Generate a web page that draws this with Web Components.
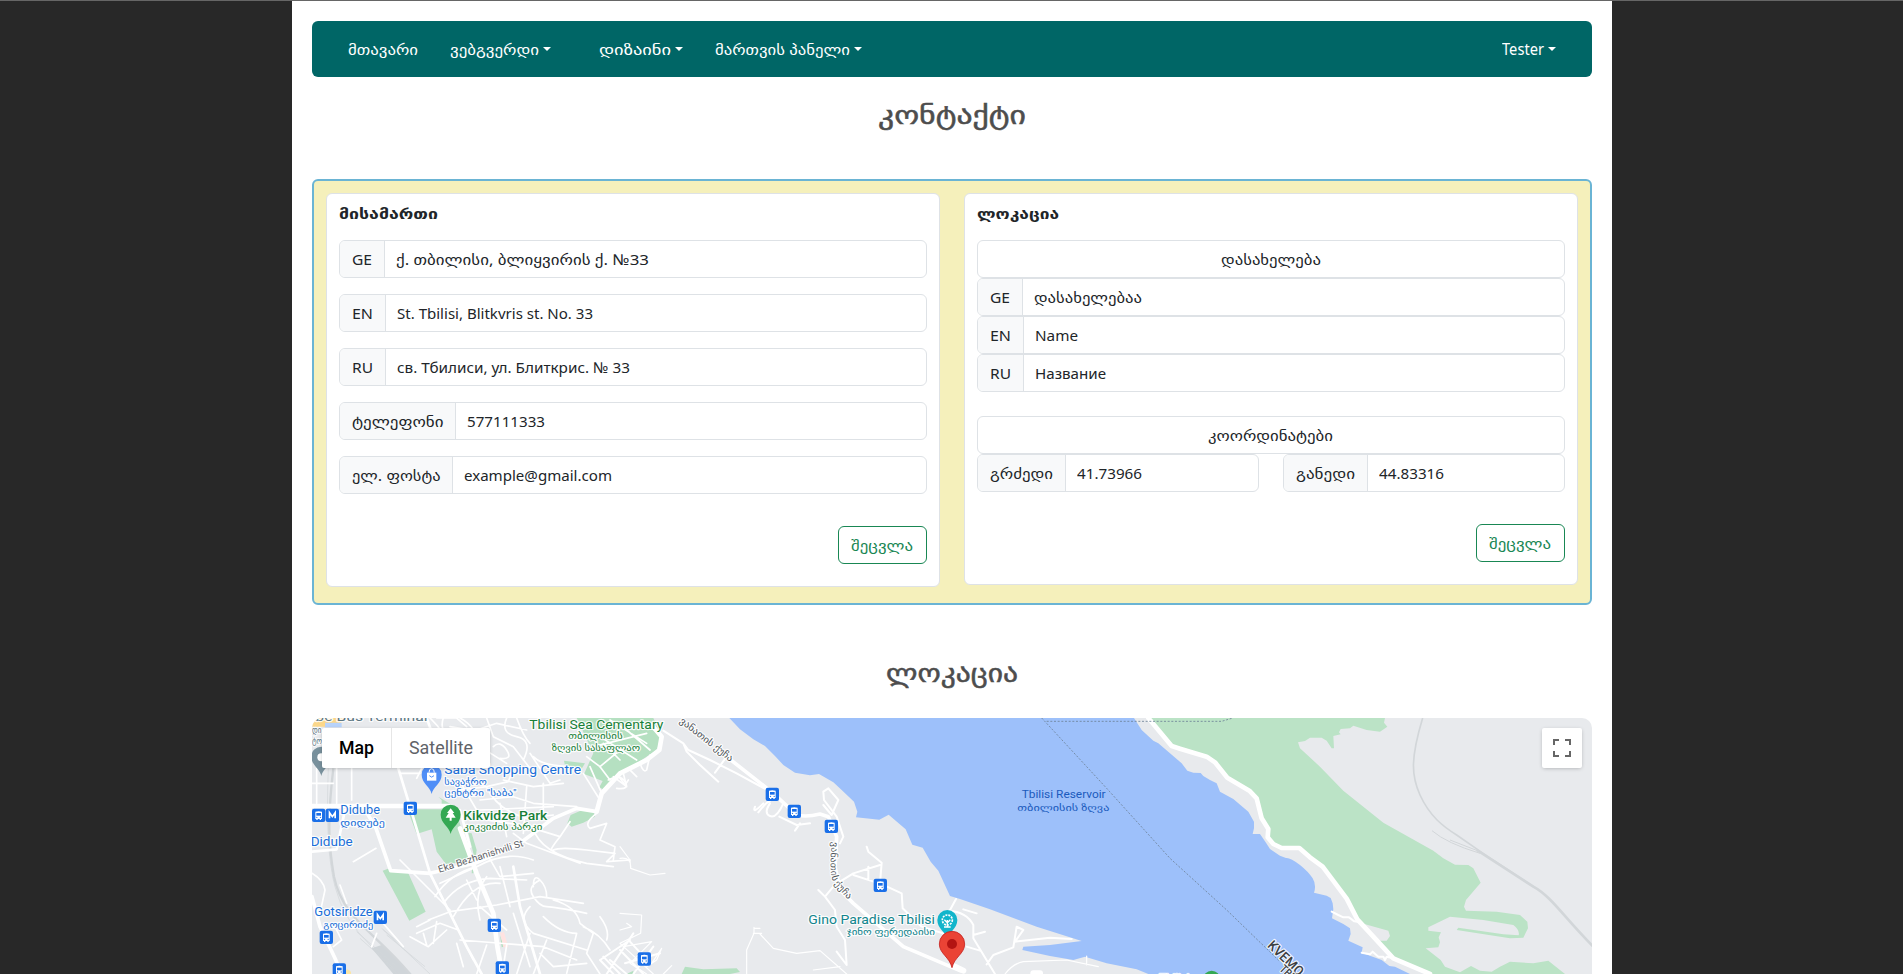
<!DOCTYPE html>
<html lang="ka">
<head>
<meta charset="utf-8">
<title>კონტაქტი</title>
<style>
html,body{margin:0;height:100%;overflow:hidden}
body{background:#282828;font-family:"Noto Sans","DejaVu Sans",sans-serif;font-size:16px;line-height:24px;color:#212529}
</style>
</head>
<body>
<contact-page></contact-page>
<script>
const define=(name,html,extra)=>customElements.define(name,class extends HTMLElement{
  connectedCallback(){
    if(this.shadowRoot)return;
    const root=this.attachShadow({mode:'open'});
    root.innerHTML=typeof html==='function'?html(this):html;
    if(extra)extra(this,root);
  }
});

/* Text squeezed or stretched to a given advance width */
define('fit-text',`<style>
:host{display:inline-block;white-space:nowrap;flex:none}
span{display:inline-block;transform-origin:0 50%;white-space:nowrap}
</style><span><slot></slot></span>`,(el,root)=>{
  const w=parseFloat(el.getAttribute('w')),s=root.querySelector('span');
  const n=s.getBoundingClientRect().width;
  el.style.width=w+'px';
  if(n)s.style.transform=`scaleX(${w/n})`;
});

define('nav-item',`<style>
:host{display:flex;align-items:center;color:#fff}
i{display:none;border:4.5px solid transparent;border-top-color:#fff;border-bottom:0;margin:0 0 1px 4px;width:0;height:0}
:host([menu]) i{display:block}
</style><slot></slot><i></i>`);

define('nav-bar',`<style>
:host{display:flex;align-items:center;gap:32px;height:56px;padding:0 36px;background:#006666;border-radius:6px;box-sizing:border-box;font-size:15px}
.wide{margin-right:16px}
.user{margin-left:auto;font-size:15.5px}
</style>
<nav-item><fit-text w="70">მთავარი</fit-text></nav-item>
<nav-item menu class="wide"><fit-text w="89">ვებგვერდი</fit-text></nav-item>
<nav-item menu><fit-text w="72">დიზაინი</fit-text></nav-item>
<nav-item menu><fit-text w="135">მართვის პანელი</fit-text></nav-item>
<nav-item menu class="user"><fit-text w="42">Tester</fit-text></nav-item>`);

define('page-heading',`<style>
:host{display:flex;justify-content:center;color:#4d4d4d;font-size:25px;line-height:36px;-webkit-text-stroke:.5px #4d4d4d}
</style><slot></slot>`);

define('info-card',`<style>
:host{display:flex;flex-direction:column;background:#fff;border:1px solid #dee2e6;border-radius:6px;padding:7px 12px 22px;box-sizing:border-box}
header{font-weight:700;font-size:15px;height:39px;line-height:24px}
</style><header><slot name="title"></slot></header><slot></slot>`);

define('field-row',`<style>
:host{display:flex;height:38px;border:1px solid #dee2e6;border-radius:6px;box-sizing:border-box;overflow:hidden;font-size:15px;line-height:36px;background:#fff}
.label{background:#f8f9fa;border-right:1px solid #dee2e6;padding:0 12px;display:flex}
.value{padding:0 11px;display:flex;flex:1}
</style><div class="label"><slot name="label"></slot></div><div class="value"><slot></slot></div>`);

define('field-caption',`<style>
:host{display:flex;justify-content:center;height:38px;border:1px solid #dee2e6;border-radius:6px;box-sizing:border-box;font-size:15px;line-height:36px}
</style><slot></slot>`);

define('edit-button',`<style>
:host{display:flex;align-self:flex-end;height:38px;width:89px;justify-content:center;border:1px solid #198754;border-radius:6px;box-sizing:border-box;color:#198754;font-size:15px;line-height:36px}
</style><fit-text w="62">შეცვლა</fit-text>`);

const bus=(x,y)=>`<g transform="translate(${x-20} ${y-20})"><rect width="40" height="40" rx="6" fill="#1a6fe8"/><path d="M10 9q10-3 20 0v22h-3v3h-4v-3h-6v3h-4v-3h-3z" fill="#fff"/><path d="M13 13h14v8H13z" fill="#1a6fe8"/><circle cx="14.5" cy="26" r="2" fill="#1a6fe8"/><circle cx="25.500" cy="26" r="2" fill="#1a6fe8"/></g>`;
const metro=(x,y)=>`<g transform="translate(${x-20} ${y-20})"><rect width="40" height="40" rx="6" fill="#1a6fe8"/><path d="M11.500 29V12l8.500 12 8.500-12v17" fill="none" stroke="#fff" stroke-width="5"/></g>`;
const t=(x,y,x2,size,fill,txt,more='')=>`<text x="${x}" y="${y}" textLength="${x2-x}" lengthAdjust="spacingAndGlyphs" font-size="${size}" fill="${fill}" ${more}>${txt}</text>`;
const pin=(x,y,c)=>`<path d="M${x} ${y+58}c-4-22-30-32-30-58a30 30 0 0 1 60 0c0 26-26 36-30 58z" fill="${c}"/>`;
const G='#188038',B='#1a6fd8',T='#12858d';

define('map-view',`<style>
:host{display:block;height:256px;border-radius:10px 10px 0 0;overflow:hidden;display:grid;position:relative;background:#e8eaed}
svg{display:block;width:1280px;height:256px;font-family:Roboto,"DejaVu Sans",sans-serif}
.halo text{paint-order:stroke;stroke:#fff;stroke-width:7px;stroke-linejoin:round;stroke-opacity:.85}
.nohalo text{stroke:none}
.w{fill:none;stroke:#fff;stroke-linecap:round;stroke-linejoin:round}
.r{fill:none;stroke:#d2d6d9}
.types{position:absolute;left:10px;top:10px;height:40px;display:flex;background:#fff;border-radius:2px;box-shadow:0 1px 4px -1px rgba(0,0,0,.3);font:18px/40px Roboto,sans-serif;color:#5f6368}
.types div{padding:0 17px;}
.types div:first-child{color:#000;font-weight:500;border-right:1px solid #e6e6e6}
.full{position:absolute;right:10px;top:10px;width:40px;height:40px;background:#fff;border-radius:2px;box-shadow:0 1px 4px -1px rgba(0,0,0,.3)}
.full svg{width:40px;height:40px}
</style>
<svg viewBox="312 718 1280 256">
<g transform="translate(620 700) scale(.333333)">
<path fill="#9dc0fa" d="M328 54L360 88 400 118 435 138 465 168 490 195 525 218 570 226 597 222 640 247 665 270 702 305 712 335 708 352 778 359 806 344 857 388 877 434 908 443 932 485 955 512 990 588 1020 597 1110 628 1250 680 1385 723 1290 735 1210 740 1207 750 1290 768 1360 780 1395 770 1460 790 1550 808 1585 822H2370L2325 800 2308 798 2285 780 2225 758 2228 742 2185 722 2192 702 2190 685 2170 672 2136 655 2140 628 2138 610 2132 594 2120 587 2082 578Q2090 555 2078 535 2065 515 2040 495 2010 472 1998 474L1980 467 1950 447 1938 428 1920 402 1898 402 1902 385 1902 365 1885 335 1840 297 1800 275 1790 250 1770 240 1750 228 1742 219 1720 218 1702 212 1685 190 1650 160 1615 130 1600 122 1565 90 1542 54z"/>
<path fill="#bbe3c6" d="M1590 54L1660 135 1760 165 1820 230 1890 270 1915 310 1935 365 1945 390 1945 415 1980 440 2040 440 2110 500 2180 600 2225 670 2305 692 2310 708 2300 722 2275 722 2325 775 2430 822H2835L2785 782 2740 790 2670 785 2640 800 2615 815 2580 812 2553 798 2520 817 2475 800 2462 780 2417 745 2455 742 2460 727 2456 712 2463 697 2425 692 2425 682 2490 650 2590 660 2680 675Q2700 690 2696 706L2650 703 2515 683 2510 690 2670 715 2710 713 2724 685 2722 665 2700 645 2630 635 2538 632 2532 620 2538 600 2582 548 2560 505 2545 495 2505 494 2470 475 2440 452 2290 368 2170 272 2100 200 2040 145 2034 127 2055 123 2070 113 2105 113 2120 122 2135 145 2142 145 2140 108 2162 103 2157 97 2162 87 2190 85 2200 77 2240 90 2280 95 2302 80 2292 68 2295 54z"/>
<path fill="#b5e0c1" d="M185 822L195 800 250 808 350 805 360 816 330 822z"/>
<g class="w">
<path stroke-width="14" d="M1585 54L1655 138 1680 146 1760 170 1785 187 1822 233 1888 272 1910 295 1925 355 1945 387 1943 412 1960 432 1985 444H2038L2070 472 2108 500 2180 596 2212 658 2260 710 2320 775 2430 822"/>
<path stroke-width="6" d="M2135 635L2155 645 2170 652 2187 652 2203 664 2212 665M2225 758L2250 763 2258 755 2275 770 2290 770 2295 780 2300 770 2320 775"/>
<path stroke-width="11" d="M320 170L460 280 530 345Q560 352 600 342L625 350 650 410 645 500 660 570 700 610 850 740 1020 812"/>
<path stroke-width="6" d="M130 92L190 130 205 150 270 180 350 220 438 268M190 130L200 155 240 195 295 245M320 170L285 218M430 310Q395 345 405 320M415 337Q440 305 450 303M450 310Q430 340 450 348T490 310M478 350L530 375 570 370M525 392L540 370M610 315L635 345 655 300 625 265 610 275 612 300 650 350 670 410 660 430M740 440L745 455 785 488 780 550 845 580 848 625 905 680 985 705M660 545L700 520 780 495M745 500L745 540M700 525L770 548M640 560L615 590 595 570M615 590L645 630 650 680 675 720 680 795 650 755M1008 597L990 630M985 632Q1040 635 1060 675V715L1125 822M1030 628L1070 640M1060 705L1095 695M1040 740L1080 752M1100 793L1120 765 1180 742 1190 680 1210 690 1185 725 1290 713 1355 717"/>
<path stroke-width="3.500" d="M1155 822Q1180 790 1210 785L1340 780 1435 800M1400 768V795M0 440L30 480 32 505 90 525 135 520M0 475Q35 470 32 505M0 640L65 645 62 700 0 730 100 822M0 690 35 680 20 670M10 740L95 725 30 790 80 822M95 790L125 745 110 780 80 800M400 700H425M402 682V700M402 685H420M402 700L380 750 380 822M420 702L460 745 530 760 600 752 680 822M580 810L660 800M155 797L130 822"/>
<path stroke-width="18" d="M1005 800L1030 812M1240 820H1260"/>
</g>
<g fill="none" stroke="#6d8297" stroke-width="2.500" stroke-dasharray="6 5"><path d="M1265 54L1280 70 1460 265 1650 475 1820 630 1980 785M1280 64H1805L1835 55"/></g>
<g class="r"><path stroke-width="5" d="M2408 54C2370 180 2375 230 2400 285 2430 350 2470 380 2510 405L2585 457 2740 560"/><path stroke-width="8" d="M2570 450L2740 560C2795 590 2830 650 2920 740"/><path stroke-width="3" d="M2436 392Q2480 430 2580 460M2490 420L2585 457"/></g>
</g>

<g transform="translate(300 700) scale(.333333)">
<g fill="#b5e0c1"><path d="M830 54H1060L1085 110 1070 150 1010 190 945 240 912 270 898 262 908 243 852 222 880 160zM792 182L855 190 845 206 795 197zM322 328H425V300L415 290 445 308 465 320 500 440 505 480 440 495 410 455 395 388 350 402zM248 512L268 505 325 520 377 635 328 662zM802 370L812 345 840 333H880L885 350 850 368 815 380zM505 398L515 400 530 450 520 520 515 520 520 460zM600 705L612 740 605 742zM980 822L1000 812V822z"/></g>
<path fill="#ffe3e1" d="M600 698L612 696 625 742 610 742z"/>
<path fill="#fbd78a" d="M36 54H138L110 80H36z"/><path fill="#b8d3fb" d="M75 68H125V82H75z"/>
<path fill="#d0d5d9" d="M215 745L245 735 335 822H280z"/>
<g class="r"><path stroke-width="7" d="M100 205C80 370 88 450 102 530 130 660 220 690 330 822"/><path stroke-width="2" d="M85 205Q75 450 105 560 130 660 215 740L290 822M170 695L290 800M180 715L300 822M250 690L390 822M260 705L375 800M245 685L310 740"/></g>
<g class="w">
<path stroke-width="14" d="M36 318H450M480 385L530 520 580 640 592 740 607 822M890 335L905 280 960 220 1040 180 1078 150 1085 110 1055 75"/>
<path stroke-width="11" d="M190 320L228 385 272 512 390 520M390 520L530 488 660 430 760 355 830 325 890 335M36 590L60 680 105 775 125 822"/>
<path stroke-width="8" d="M295 205L330 320 360 420 390 520 445 630 500 740 545 822M36 455L110 448 135 330M380 54L400 110 560 205M640 500L660 620 720 822M480 330L510 440"/>
<path stroke-width="5" d="M36 250H100M155 205V300M50 205V310M110 90V310M160 485L228 445M225 385L190 320M230 700L215 740M245 665L310 740M300 220H360M350 235 365 205M390 54Q440 100 450 160T480 210M430 54Q410 110 500 130L560 190M480 54Q530 80 540 140L620 190M560 54L580 110 640 140 690 205M620 54Q600 100 650 110T670 180M650 54Q670 110 690 130M500 100 590 70 680 90M450 80 540 95M580 140Q600 120 620 150T600 175M410 54H470L500 80M700 170Q720 190 760 195L840 205M690 160L750 250 780 240M640 205L625 245 560 260 480 270M560 260Q590 330 680 355L760 345M480 245 530 330 560 360M610 240L700 260 790 250M540 300L640 290 700 310 830 320M600 310L620 410M680 260L670 400M730 250V340M540 330L760 320M560 360L700 380M640 400 680 430M850 220 900 300M870 200 905 280M860 170 900 200 930 240M880 140 1040 100M900 110 1010 180M940 230 980 260 970 220M890 340Q850 370 870 385L920 370 900 420 945 440 940 480M810 365 780 410 700 385M780 410Q740 460 760 450T860 450L945 460 920 485 990 480M680 430L840 490M700 480Q620 450 530 500L420 550M700 385Q720 460 860 490L940 500"/>
<path stroke-width="5" d="M300 480 450 630M385 660L450 635 590 615 720 590 850 610M405 590Q450 520 530 500M430 610Q480 540 570 535L680 540M460 650Q520 540 600 550M500 540 530 600M540 620 620 690M560 530Q520 580 540 660M600 500 630 620M560 460 600 530 700 520M720 540Q680 560 700 590T740 620 860 640M700 560Q700 520 720 540T740 590M690 620Q650 660 700 700L860 750M480 720 730 740 830 780M560 735 530 822M620 735 610 800M640 640 690 800M690 700 650 822M740 720 700 822M760 600Q830 620 840 670L880 700 860 760 900 822M850 680Q900 700 930 750M720 760 760 800 860 790M730 650Q780 700 830 700L800 820M900 650Q930 690 920 720M350 700 420 670 475 690M330 710 385 740 440 690M370 700 380 735M410 665 400 730M450 640 520 780M470 730 490 800M350 680 390 660M120 555 140 610M36 520Q70 540 75 570L60 640M100 670 125 720 100 740"/>
<path stroke-width="6" d="M940 822L900 780 990 720M1000 700Q960 760 920 822M930 780 980 822M960 750 1030 822M990 725 1050 790M1000 822 1060 740M975 790 1080 760M910 770 960 822"/>
<path stroke-width="5" d="M925 240Q960 220 975 245T950 265M1020 190Q1030 220 1040 210L1050 165M1010 230 985 205M960 235 975 255 985 240M910 130 960 180M980 90 1050 150M930 60 1040 130M960 150 900 200"/>
</g>
<path fill="#fbe5a5" d="M140 808Q155 812 153 822H135z"/>
<g class="halo">
${t(20,62,383,37,'#5c7682','ubube Bus Terminal'.slice(2))}
${t(36,98,64,28,'#5c7682','დი')}${t(36,132,66,28,'#5c7682','ტო')}
${t(688,87,1090,37,G,'Tbilisi Sea Cementary')}
${t(805,117,968,27,G,'თბილისის')}
${t(755,152,1020,27,G,'ზღვის სასაფლაო')}
${t(433,221,843,37,B,'Saba Shopping Centre')}
${t(433,255,560,27,B,'სავაჭრო')}
${t(433,288,650,27,B,'ცენტრი "საბა"')}
${t(490,360,742,37,G,'Kikvidze Park','font-weight="500"')}
${t(490,391,727,27,G,'კიკვიძის პარკი')}
${t(121,343,240,37,B,'Didube')}
${t(121,378,255,27,B,'დიდუბე')}
${t(32,437,158,37,B,'Didube')}
${t(43,649,218,37,B,'Gotsiridze')}
${t(70,683,220,27,B,'გოცირიძე')}
<g transform="translate(418 518) rotate(-17.500)">${t(0,0,266,29,'#5f6368','Eka Bezhanishvili St')}</g>
<g transform="translate(1137 66) rotate(38)">${t(0,0,195,28,'#4d5459','ვანათის ქუჩა')}</g>
<path id="st" d="M1596 425L1592 470Q1590 540 1605 555L1655 610" fill="none"/>
<text font-size="27" fill="#4d5459"><textPath href="#st" textLength="192" lengthAdjust="spacingAndGlyphs">ვანათის ქუჩა</textPath></text>
${t(1525,672,1905,37,T,'Gino Paradise Tbilisi')}
${t(1640,705,1905,27,T,'ჯინო ფერედაისი')}
<g transform="translate(2900 739) rotate(44)">${t(0,0,132,41,'#3c4043','KVEMO','font-weight="500"')}${t(75,25,135,35,'#3c4043','TBIL','font-weight="500"')}</g>
<text x="2578" y="847" font-size="34" fill="${G}">Tbilisi</text>
</g>
${t(2165,294,2417,34,'#1b5bbd','Tbilisi Reservoir')}
${t(2152,332,2428,27,'#1b5bbd','თბილისის ზღვა')}
${bus(331,325)}${bus(79,712)}${bus(118,810)}${bus(583,676)}${bus(607,804)}${bus(56,346)}
${metro(97,346)}${metro(241,652)}
${bus(1417,283)}${bus(1483,334)}${bus(1594,379)}${bus(1741,556)}${bus(1033,777)}
${pin(64,170,'#78909c')}<circle cx="64" cy="172" r="12" fill="#fff"/>
${pin(395,224,'#4f8ef7')}<path d="M381 218h28v24h-28z" fill="#fff"/><path d="M387 218q0-12 8-12t8 12M388 228q7 9 14 0" fill="none" stroke="#fff" stroke-width="3"/><path d="M388 227q7 9 14 0" fill="none" stroke="#4f8ef7" stroke-width="3"/>
${pin(452,344,'#34a853')}<path d="M452 325l11 14h-5l9 14h-12v9h-6v-9h-12l9-14h-5z" fill="#fff"/>
${pin(1942,660,'#12b5cb')}<g stroke="#fff" fill="none" stroke-width="4"><circle cx="1942" cy="660" r="15" stroke-width="5" stroke-dasharray="6 3"/><path d="M1942 682V660M1932 681h20M1942 668l-9-9M1942 668l9-9"/></g>
<circle cx="2735" cy="838" r="26" fill="#34a853"/>
<path d="M1956 803c-7-32-38-42-38-71a38 38 0 0 1 76 0c0 29-31 39-38 71z" fill="#ea4335" stroke="#c5221f" stroke-width="2.500"/><circle cx="1956" cy="732" r="15" fill="#b31412"/>
</g>
</svg>
<div class="types"><div><fit-text w="35">Map</fit-text></div><div><fit-text w="64">Satellite</fit-text></div></div>
<div class="full"><svg viewBox="0 0 40 40"><path d="M12 17V12h5M23 12h5v5M28 23v5h-5M17 28h-5v-5" fill="none" stroke="#666" stroke-width="2"/></svg></div>`);

define('contact-page',`<style>
:host{display:block;border-top:1px solid #666;height:974px;box-sizing:border-box;overflow:hidden}
main{width:1320px;height:973px;margin:0 auto;padding:20px 20px 0;box-sizing:border-box;background:#fff}
.h1{height:83px;padding-top:19px}
.h2{height:64px;padding-top:49px}
.panel{display:grid;grid-template-columns:1fr 1fr;gap:24px;align-items:start;height:426px;padding:12px;background:#f5f0bb;border:2px solid #6ab4d4;border-radius:6px;box-sizing:border-box}
.stack{display:grid;gap:16px;margin-bottom:32px}
.tight{display:grid;margin-bottom:24px}
.coords{display:grid;grid-template-columns:1fr 1fr;column-gap:24px;margin-bottom:32px}
.coords field-caption{grid-column:1/3}
</style>
<main>
<nav-bar></nav-bar>
<page-heading class="h1"><fit-text w="148">კონტაქტი</fit-text></page-heading>
<section class="panel">
<info-card><fit-text slot="title" w="99">მისამართი</fit-text>
<div class="stack">
<field-row><fit-text slot="label" w="20">GE</fit-text><fit-text w="253">ქ. თბილისი, ბლიყვირის ქ. №33</fit-text></field-row>
<field-row><fit-text slot="label" w="21">EN</fit-text><fit-text w="196">St. Tbilisi, Blitkvris st. No. 33</fit-text></field-row>
<field-row><fit-text slot="label" w="21">RU</fit-text><fit-text w="233">св. Тбилиси, ул. Блиткрис. № 33</fit-text></field-row>
<field-row><fit-text slot="label" w="91.500">ტელეფონი</fit-text><fit-text w="78">577111333</fit-text></field-row>
<field-row><fit-text slot="label" w="88.500">ელ. ფოსტა</fit-text><fit-text w="148">example@gmail.com</fit-text></field-row>
</div>
<edit-button></edit-button>
</info-card>
<info-card><fit-text slot="title" w="82">ლოკაცია</fit-text>
<div class="tight">
<field-caption><fit-text w="100">დასახელება</fit-text></field-caption>
<field-row><fit-text slot="label" w="20">GE</fit-text><fit-text w="108">დასახელებაა</fit-text></field-row>
<field-row><fit-text slot="label" w="21">EN</fit-text><fit-text w="43">Name</fit-text></field-row>
<field-row><fit-text slot="label" w="21">RU</fit-text><fit-text w="71">Название</fit-text></field-row>
</div>
<div class="coords">
<field-caption><fit-text w="125">კოორდინატები</fit-text></field-caption>
<field-row><fit-text slot="label" w="63">გრძედი</fit-text><fit-text w="65">41.73966</fit-text></field-row>
<field-row><fit-text slot="label" w="59">განედი</fit-text><fit-text w="65">44.83316</fit-text></field-row>
</div>
<edit-button></edit-button>
</info-card>
</section>
<page-heading class="h2"><fit-text w="132">ლოკაცია</fit-text></page-heading>
<map-view></map-view>
</main>`);
</script>
</body>
</html>
